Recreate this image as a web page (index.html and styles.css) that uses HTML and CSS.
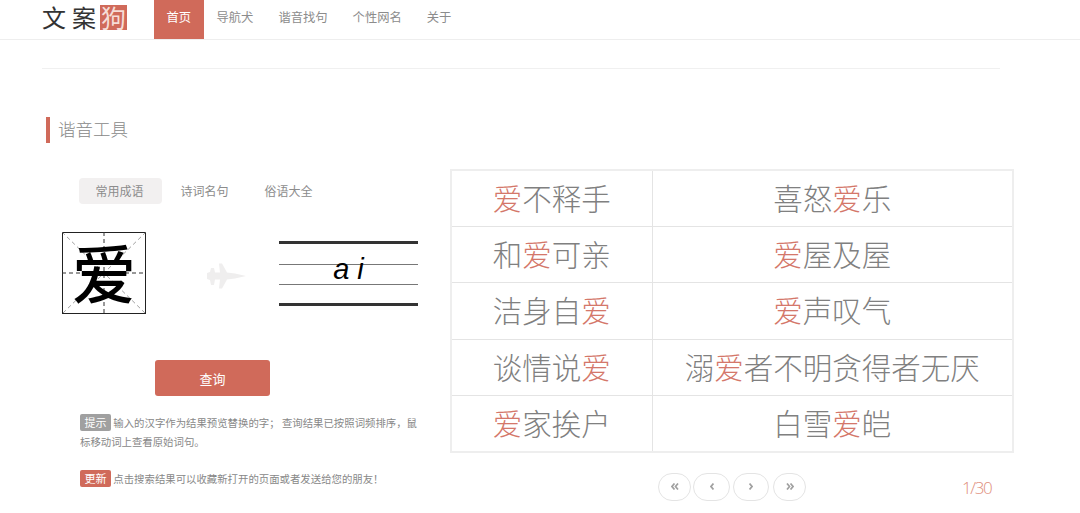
FILE: index.html
```html
<!DOCTYPE html>
<html lang="zh">
<head>
<meta charset="utf-8">
<title>文案狗</title>
<link rel="stylesheet" href="styles.css">
</head>
<body>
<header class="topbar">
  <div class="logo"><span class="logo-t">文</span><span class="logo-t">案</span><span class="logo-seal">狗</span></div>
  <nav class="nav">
    <a class="nav-item active">首页</a>
    <a class="nav-item">导航犬</a>
    <a class="nav-item">谐音找句</a>
    <a class="nav-item">个性网名</a>
    <a class="nav-item">关于</a>
  </nav>
</header>
<main class="page">
  <hr class="rule">
  <h2 class="section-title">谐音工具</h2>
  <section class="tool">
    <div class="left">
      <div class="tabs">
        <span class="tab on">常用成语</span>
        <span class="tab">诗词名句</span>
        <span class="tab">俗语大全</span>
      </div>
      <div class="convert">
        <svg class="charbox" width="84" height="82" viewBox="0 0 84 82">
          <rect x="0.5" y="0.5" width="83" height="81" fill="#fff" stroke="#222"/>
          <path d="M0 0L84 82M84 0L0 82" stroke="#777" stroke-width="0.7" stroke-dasharray="4 3"/>
          <path d="M42 0V82M0 41H84" stroke="#333" stroke-dasharray="4 3"/>
          <text class="bigchar" x="42" y="66">爱</text>
        </svg>
        <svg class="plane" width="40" height="26" viewBox="0 0 40 26">
          <path d="M39 13L28 10.500L20 9.500L15 0.500L12 0.500L13 9.500L8 9.500L7 5L4 5L3 9L0 10L0 16L3 17L4 22L7 22L8 16.500L13 16.500L12 25.500L15 25.500L20 16.500L28 15.500Z" fill="#efeeee"/>
        </svg>
        <div class="pinyin"><span class="py-text">a i</span></div>
      </div>
      <button class="query">查询</button>
      <p class="note"><span class="badge gray">提示</span> 输入的汉字作为结果预览替换的字； 查询结果已按照词频排序，鼠标移动词上查看原始词句。</p>
      <p class="note update"><span class="badge red">更新</span> 点击搜索结果可以收藏新打开的页面或者发送给您的朋友！</p>
    </div>
    <div class="right">
      <table class="results">
        <tr><td><em>爱</em>不释手</td><td>喜怒<em>爱</em>乐</td></tr>
        <tr><td>和<em>爱</em>可亲</td><td><em>爱</em>屋及屋</td></tr>
        <tr><td>洁身自<em>爱</em></td><td><em>爱</em>声叹气</td></tr>
        <tr><td>谈情说<em>爱</em></td><td>溺<em>爱</em>者不明贪得者无厌</td></tr>
        <tr><td><em>爱</em>家挨户</td><td>白雪<em>爱</em>皑</td></tr>
      </table>
      <div class="pager-row">
        <div class="pager">
          <span class="pg w33"><svg width="8" height="7" viewBox="0 0 8 7"><path d="M3.500 0.500L1 3.500L3.500 6.500M7 0.500L4.500 3.500L7 6.500" class="chev"/></svg></span>
          <span class="pg w37 gap2"><svg width="4" height="7" viewBox="0 0 4 7"><path d="M3.500 0.500L1 3.500L3.500 6.500" class="chev"/></svg></span>
          <span class="pg w36 gap3"><svg width="4" height="7" viewBox="0 0 4 7"><path d="M0.500 0.500L3 3.500L0.500 6.500" class="chev"/></svg></span>
          <span class="pg w33 gap4"><svg width="8" height="7" viewBox="0 0 8 7"><path d="M1 0.500L3.500 3.500L1 6.500M4.500 0.500L7 3.500L4.500 6.500" class="chev"/></svg></span>
        </div>
        <span class="count">1/30</span>
      </div>
    </div>
  </section>
</main>
</body>
</html>
```

FILE: styles.css
```css
* { box-sizing: border-box; }
html, body { margin: 0; padding: 0; height: 513px; overflow: hidden; background: #fff; }
body { font-family: "Noto Sans CJK SC", "Noto Sans", sans-serif; color: #888; font-weight: 400; }

.topbar { display: flex; height: 40px; border-bottom: 1px solid #eee; padding-left: 42px; }
.logo { display: flex; align-items: flex-start; width: 112px; height: 39px; padding-top: 5px; }
.logo-t { font-size: 24px; line-height: 24px; width: 30px; color: #333; }
.logo-t + .logo-t { width: 28px; }
.logo-seal { width: 27px; height: 25px; line-height: 24px; font-size: 25px; text-align: center; background: #d06a5a; color: #f6ddd7; }

.nav { display: flex; height: 39px; }
.nav-item { font-size: 12.300px; line-height: 35px; padding: 0 12.500px; color: #8c8c8c; }
.nav-item.active { width: 50px; background: #d06a5a; color: #fff; }

.page { padding: 0 0 0 42px; }
.rule { width: 958px; height: 1px; margin: 28px 0 0; border: 0; background: #f0f0f0; }
.section-title { margin: 48px 0 0 4px; padding-left: 8px; border-left: 4px solid #d06a5a; height: 26px; font-size: 17.500px; line-height: 24px; font-weight: 300; color: #888; }

.tool { display: flex; margin-top: 26px; }
.left { width: 408px; }
.tabs { display: flex; margin: 9px 0 0 37px; }
.tab { width: 83px; height: 26px; font-size: 12px; line-height: 26px; text-align: center; color: #8c8c8c; border-radius: 4px; }
.tab.on { background: #f2f0f0; padding-right: 2px; }
.tab + .tab { margin-left: 1px; }

.convert { display: flex; align-items: flex-start; margin: 28px 0 0 20px; }
.charbox { display: block; flex: none; overflow: visible; }
.bigchar { font-family: "Noto Sans CJK SC", sans-serif; font-size: 64px; font-weight: 500; fill: #000; text-anchor: middle; }
.plane { margin: 31px 0 0 61px; flex: none; }
.pinyin { margin: 9px 0 0 32px; width: 139px; height: 65px; border-top: 3px solid #333; border-bottom: 3px solid #333; background: linear-gradient(#777,#777) 0 20px / 100% 1px no-repeat, linear-gradient(#777,#777) 0 40px / 100% 1px no-repeat; text-align: center; }
.py-text { display: block; font-family: "Liberation Sans", sans-serif; font-style: italic; font-size: 29px; line-height: 30px; margin-top: 10px; color: #000; }

.query { display: block; width: 115px; height: 36px; margin: 46px 0 0 113px; border: 0; border-radius: 3px; background: #d06a5a; color: #fff; font-family: inherit; font-size: 13px; }

.note { width: 338px; margin: 17px 0 0 38px; font-size: 10.400px; line-height: 19px; color: #888; }
.note.update { margin-top: 18px; }
.badge { display: inline-block; width: 31px; height: 17px; line-height: 17px; text-align: center; border-radius: 2px; color: #fff; font-size: 11px; }
.badge.gray { background: #a0a0a0; }
.badge.red { background: #d06a5a; }

.right { width: 564px; }
.results { width: 564px; height: 282px; table-layout: fixed; border-collapse: collapse; border: 2px solid #eee; }
.results td { height: 56.400px; padding: 0 0 3px; border: 1px solid #e4e4e4; border-top-color: #eee; font-size: 29.500px; font-weight: 300; line-height: 40px; text-align: center; color: #808080; }
.results td:first-child { width: 201px; }
.results em { font-style: normal; color: #d4776a; }

.pager-row { display: flex; align-items: flex-start; margin-top: 20px; padding-left: 208px; }
.pager { display: flex; }
.pg { display: flex; align-items: center; justify-content: center; height: 28px; border: 1px solid #e4e4e4; border-radius: 14px; }
.chev { fill: none; stroke: #a0a0a0; stroke-width: 1.700; }
.w33 { width: 33px; }
.w36 { width: 36px; }
.w37 { width: 37px; }
.gap2 { margin-left: 2px; }
.gap3 { margin-left: 3px; }
.gap4 { margin-left: 4px; }
.count { margin: 2px 0 0 156px; font-family: "Open Sans", sans-serif; font-size: 17px; letter-spacing: -1.400px; line-height: 26px; font-weight: 300; color: #e08e7b; }
```
